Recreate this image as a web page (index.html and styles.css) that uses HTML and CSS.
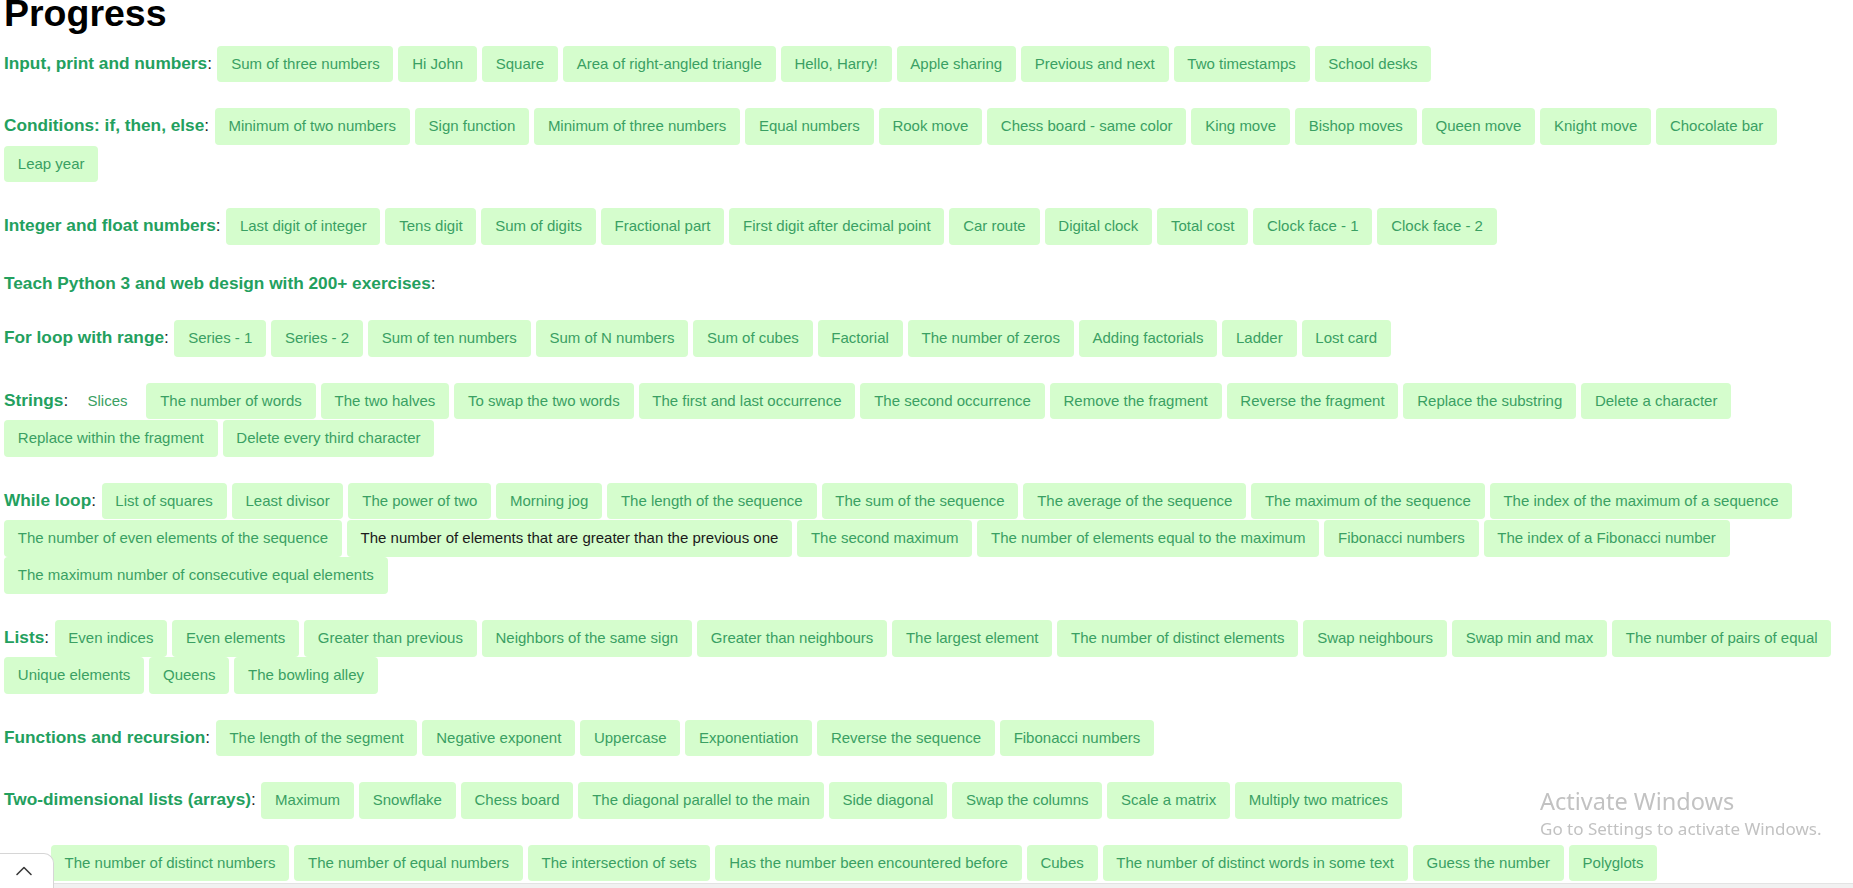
FILE: index.html
```html
<!DOCTYPE html>
<html lang="en">
<head>
<meta charset="utf-8">
<title>Progress</title>
<link rel="stylesheet" href="styles.css">
</head>
<body>
<main class="page">
  <h1 class="title">Progress</h1>

  <section class="topic">
    <span class="label"><b>Input, print and numbers</b>:</span>
    <a class="task">Sum of three numbers</a>
    <a class="task">Hi John</a>
    <a class="task">Square</a>
    <a class="task">Area of right-angled triangle</a>
    <a class="task">Hello, Harry!</a>
    <a class="task">Apple sharing</a>
    <a class="task">Previous and next</a>
    <a class="task">Two timestamps</a>
    <a class="task">School desks</a>
  </section>

  <section class="topic">
    <span class="label"><b>Conditions: if, then, else</b>:</span>
    <a class="task">Minimum of two numbers</a>
    <a class="task">Sign function</a>
    <a class="task">Minimum of three numbers</a>
    <a class="task">Equal numbers</a>
    <a class="task">Rook move</a>
    <a class="task">Chess board - same color</a>
    <a class="task">King move</a>
    <a class="task">Bishop moves</a>
    <a class="task">Queen move</a>
    <a class="task">Knight move</a>
    <a class="task">Chocolate bar</a>
    <a class="task">Leap year</a>
  </section>

  <section class="topic">
    <span class="label"><b>Integer and float numbers</b>:</span>
    <a class="task">Last digit of integer</a>
    <a class="task">Tens digit</a>
    <a class="task">Sum of digits</a>
    <a class="task">Fractional part</a>
    <a class="task">First digit after decimal point</a>
    <a class="task">Car route</a>
    <a class="task">Digital clock</a>
    <a class="task">Total cost</a>
    <a class="task">Clock face - 1</a>
    <a class="task">Clock face - 2</a>
  </section>

  <section class="topic">
    <span class="label"><b>Teach Python 3 and web design with 200+ exercises</b>:</span>
  </section>

  <section class="topic">
    <span class="label"><b>For loop with range</b>:</span>
    <a class="task">Series - 1</a>
    <a class="task">Series - 2</a>
    <a class="task">Sum of ten numbers</a>
    <a class="task">Sum of N numbers</a>
    <a class="task">Sum of cubes</a>
    <a class="task">Factorial</a>
    <a class="task">The number of zeros</a>
    <a class="task">Adding factorials</a>
    <a class="task">Ladder</a>
    <a class="task">Lost card</a>
  </section>

  <section class="topic">
    <span class="label"><b>Strings</b>:</span>
    <a class="task plain">Slices</a>
    <a class="task">The number of words</a>
    <a class="task">The two halves</a>
    <a class="task">To swap the two words</a>
    <a class="task">The first and last occurrence</a>
    <a class="task">The second occurrence</a>
    <a class="task">Remove the fragment</a>
    <a class="task">Reverse the fragment</a>
    <a class="task">Replace the substring</a>
    <a class="task">Delete a character</a>
    <a class="task">Replace within the fragment</a>
    <a class="task">Delete every third character</a>
  </section>

  <section class="topic">
    <span class="label"><b>While loop</b>:</span>
    <a class="task">List of squares</a>
    <a class="task">Least divisor</a>
    <a class="task">The power of two</a>
    <a class="task">Morning jog</a>
    <a class="task">The length of the sequence</a>
    <a class="task">The sum of the sequence</a>
    <a class="task">The average of the sequence</a>
    <a class="task">The maximum of the sequence</a>
    <a class="task">The index of the maximum of a sequence</a>
    <a class="task">The number of even elements of the sequence</a>
    <a class="task current">The number of elements that are greater than the previous one</a>
    <a class="task">The second maximum</a>
    <a class="task">The number of elements equal to the maximum</a>
    <a class="task">Fibonacci numbers</a>
    <a class="task">The index of a Fibonacci number</a>
    <a class="task">The maximum number of consecutive equal elements</a>
  </section>

  <section class="topic">
    <span class="label"><b>Lists</b>:</span>
    <a class="task">Even indices</a>
    <a class="task">Even elements</a>
    <a class="task">Greater than previous</a>
    <a class="task">Neighbors of the same sign</a>
    <a class="task">Greater than neighbours</a>
    <a class="task">The largest element</a>
    <a class="task">The number of distinct elements</a>
    <a class="task">Swap neighbours</a>
    <a class="task">Swap min and max</a>
    <a class="task">The number of pairs of equal</a>
    <a class="task">Unique elements</a>
    <a class="task">Queens</a>
    <a class="task">The bowling alley</a>
  </section>

  <section class="topic">
    <span class="label"><b>Functions and recursion</b>:</span>
    <a class="task">The length of the segment</a>
    <a class="task">Negative exponent</a>
    <a class="task">Uppercase</a>
    <a class="task">Exponentiation</a>
    <a class="task">Reverse the sequence</a>
    <a class="task">Fibonacci numbers</a>
  </section>

  <section class="topic">
    <span class="label"><b>Two-dimensional lists (arrays)</b>:</span>
    <a class="task">Maximum</a>
    <a class="task">Snowflake</a>
    <a class="task">Chess board</a>
    <a class="task">The diagonal parallel to the main</a>
    <a class="task">Side diagonal</a>
    <a class="task">Swap the columns</a>
    <a class="task">Scale a matrix</a>
    <a class="task">Multiply two matrices</a>
  </section>

  <section class="topic">
    <span class="label"><b>Sets</b>:</span>
    <a class="task">The number of distinct numbers</a>
    <a class="task">The number of equal numbers</a>
    <a class="task">The intersection of sets</a>
    <a class="task">Has the number been encountered before</a>
    <a class="task">Cubes</a>
    <a class="task">The number of distinct words in some text</a>
    <a class="task">Guess the number</a>
    <a class="task">Polyglots</a>
  </section>
</main>

<div class="bottom-bar"></div>

<button class="to-top" type="button" aria-label="Back to top">
  <svg width="18" height="11" viewBox="0 0 18 11" aria-hidden="true">
    <polyline points="2,9.5 9,2.5 16,9.5" fill="none" stroke="#3a3a3a" stroke-width="1.6" stroke-linecap="round" stroke-linejoin="round"/>
  </svg>
</button>

<div class="activate">
  <div class="activate-title">Activate Windows</div>
  <div class="activate-sub">Go to Settings to activate Windows.</div>
</div>
</body>
</html>
```

FILE: styles.css
```css
html, body {
  margin: 0;
  padding: 0;
  background: #ffffff;
  overflow: hidden;
}

body {
  font-family: "Liberation Sans", Arial, sans-serif;
  color: #222222;
}

.page {
  padding: 0 4px;
}

.title {
  font-size: 37.5px;
  font-weight: bold;
  line-height: 42px;
  margin: -8.5px 0 12.2px 0;
  color: #000000;
}

.topic {
  display: flex;
  flex-wrap: wrap;
  align-items: baseline;
  column-gap: 5px;
  row-gap: 0.7px;
  margin: 0 0 25.8px 0;
}

.label {
  font-size: 17.25px;
  line-height: 24px;
  color: #1f1f1f;
  margin-right: 0.5px;
}

.label b {
  color: #23a05e;
  font-weight: bold;
}

.task {
  display: block;
  font-size: 15px;
  line-height: 23px;
  padding: 6px 13.8px 7.7px 13.8px;
  background: #d5fdcd;
  color: #3aa063;
  border-radius: 4px;
  white-space: nowrap;
  cursor: pointer;
}

.task.plain {
  background: transparent;
}

.task.current {
  color: #1a1a1a;
}

.bottom-bar {
  position: fixed;
  left: 0;
  right: 0;
  bottom: 0;
  height: 4px;
  background: #f1f1f1;
  border-top: 1px solid #e3e3e3;
}

.to-top {
  position: fixed;
  left: 0;
  bottom: 0;
  width: 54px;
  height: 35px;
  padding: 0 6px 2px 0;
  margin: 0;
  background: #ffffff;
  border: 1px solid #d6d6d6;
  border-left: none;
  border-bottom: none;
  border-top-right-radius: 10px;
  display: flex;
  align-items: center;
  justify-content: center;
  cursor: pointer;
}

.activate {
  position: fixed;
  left: 1540px;
  top: 786px;
  font-family: "Noto Sans", "Open Sans", sans-serif;
  color: #c2c2c2;
  pointer-events: none;
}

.activate-title {
  font-size: 23.5px;
  line-height: 30px;
}

.activate-sub {
  font-size: 17px;
  line-height: 22px;
  margin-top: 2px;
}
```
